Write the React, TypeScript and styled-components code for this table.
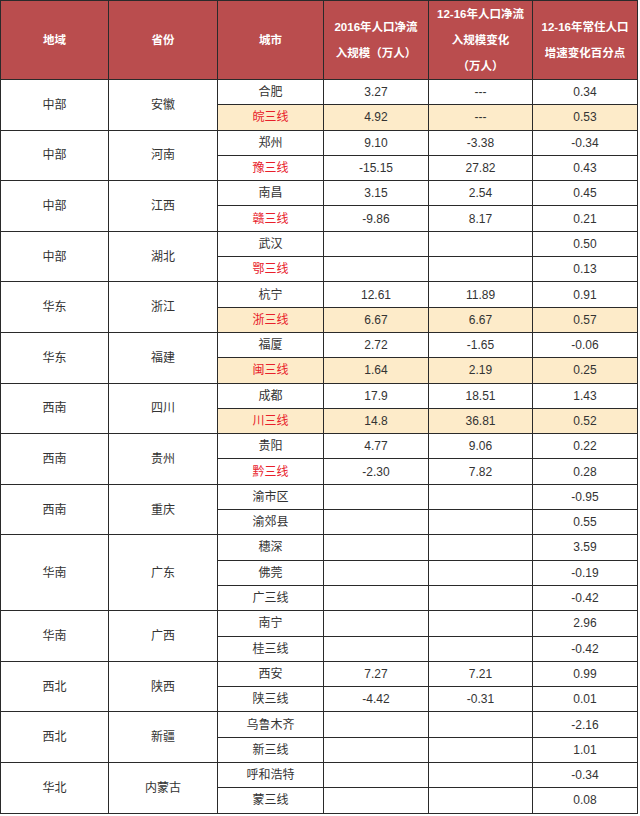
import React from "react";
import styled, { createGlobalStyle } from "styled-components";

const Global = createGlobalStyle`
  html, body { margin: 0; padding: 0; background: #ffffff; }
  body { font-family: "Liberation Sans", "Noto Sans CJK SC", sans-serif; }
`;

const Table = styled.table`
  border-collapse: collapse;
  table-layout: fixed;
  width: 637px;
  font-family: "Liberation Sans", "Noto Sans CJK SC", sans-serif;
`;

const HeadRow = styled.tr`
  height: 79px;
`;

const HeadCell = styled.th`
  background: #ba4d4e;
  color: #ffffff;
  font-weight: 700;
  font-size: 11.5px;
  line-height: 26px;
  text-align: center;
  vertical-align: middle;
  border: 1px solid #2a2a2a;
  padding: 0 2px;
`;

const BodyRow = styled.tr`
  height: 25.3px;
`;

const Cell = styled.td<{ $hl?: boolean; $red?: boolean }>`
  background: ${(p) => (p.$hl ? "#fdebc9" : "#ffffff")};
  color: ${(p) => (p.$red ? "#e8202a" : "#333333")};
  font-size: 12px;
  text-align: center;
  vertical-align: middle;
  border: 1px solid #2a2a2a;
  padding: 0;
  line-height: 14px;
`;

type Row = { city: string; a: string; b: string; c: string; hl?: boolean; red?: boolean };
type Group = { region: string; prov: string; rows: Row[] };

const r = (city: string, a: string, b: string, c: string, hl = false, red = false): Row => ({ city, a, b, c, hl, red });

const groups: Group[] = [
  { region: "中部", prov: "安徽", rows: [r("合肥", "3.27", "---", "0.34"), r("皖三线", "4.92", "---", "0.53", true, true)] },
  { region: "中部", prov: "河南", rows: [r("郑州", "9.10", "-3.38", "-0.34"), r("豫三线", "-15.15", "27.82", "0.43", false, true)] },
  { region: "中部", prov: "江西", rows: [r("南昌", "3.15", "2.54", "0.45"), r("赣三线", "-9.86", "8.17", "0.21", false, true)] },
  { region: "中部", prov: "湖北", rows: [r("武汉", "", "", "0.50"), r("鄂三线", "", "", "0.13", false, true)] },
  { region: "华东", prov: "浙江", rows: [r("杭宁", "12.61", "11.89", "0.91"), r("浙三线", "6.67", "6.67", "0.57", true, true)] },
  { region: "华东", prov: "福建", rows: [r("福厦", "2.72", "-1.65", "-0.06"), r("闽三线", "1.64", "2.19", "0.25", true, true)] },
  { region: "西南", prov: "四川", rows: [r("成都", "17.9", "18.51", "1.43"), r("川三线", "14.8", "36.81", "0.52", true, true)] },
  { region: "西南", prov: "贵州", rows: [r("贵阳", "4.77", "9.06", "0.22"), r("黔三线", "-2.30", "7.82", "0.28", false, true)] },
  { region: "西南", prov: "重庆", rows: [r("渝市区", "", "", "-0.95"), r("渝郊县", "", "", "0.55")] },
  { region: "华南", prov: "广东", rows: [r("穗深", "", "", "3.59"), r("佛莞", "", "", "-0.19"), r("广三线", "", "", "-0.42")] },
  { region: "华南", prov: "广西", rows: [r("南宁", "", "", "2.96"), r("桂三线", "", "", "-0.42")] },
  { region: "西北", prov: "陕西", rows: [r("西安", "7.27", "7.21", "0.99"), r("陕三线", "-4.42", "-0.31", "0.01")] },
  { region: "西北", prov: "新疆", rows: [r("乌鲁木齐", "", "", "-2.16"), r("新三线", "", "", "1.01")] },
  { region: "华北", prov: "内蒙古", rows: [r("呼和浩特", "", "", "-0.34"), r("蒙三线", "", "", "0.08")] },
];

const widths = [108, 109, 106, 105, 104, 105];

export default function App() {
  return (
    <>
      <Global />
      <Table>
        <colgroup>
          {widths.map((w, i) => (
            <col key={i} style={{ width: w }} />
          ))}
        </colgroup>
        <thead>
          <HeadRow>
            <HeadCell>地域</HeadCell>
            <HeadCell>省份</HeadCell>
            <HeadCell>城市</HeadCell>
            <HeadCell>2016年人口净流<br />入规模（万人）</HeadCell>
            <HeadCell>12-16年人口净流<br />入规模变化<br />（万人）</HeadCell>
            <HeadCell>12-16年常住人口<br />增速变化百分点</HeadCell>
          </HeadRow>
        </thead>
        <tbody>
          {groups.map((g, gi) =>
            g.rows.map((row, ri) => (
              <BodyRow key={`${gi}-${ri}`}>
                {ri === 0 && (
                  <>
                    <Cell rowSpan={g.rows.length}>{g.region}</Cell>
                    <Cell rowSpan={g.rows.length}>{g.prov}</Cell>
                  </>
                )}
                <Cell $hl={row.hl} $red={row.red}>{row.city}</Cell>
                <Cell $hl={row.hl}>{row.a}</Cell>
                <Cell $hl={row.hl}>{row.b}</Cell>
                <Cell $hl={row.hl}>{row.c}</Cell>
              </BodyRow>
            ))
          )}
        </tbody>
      </Table>
    </>
  );
}
